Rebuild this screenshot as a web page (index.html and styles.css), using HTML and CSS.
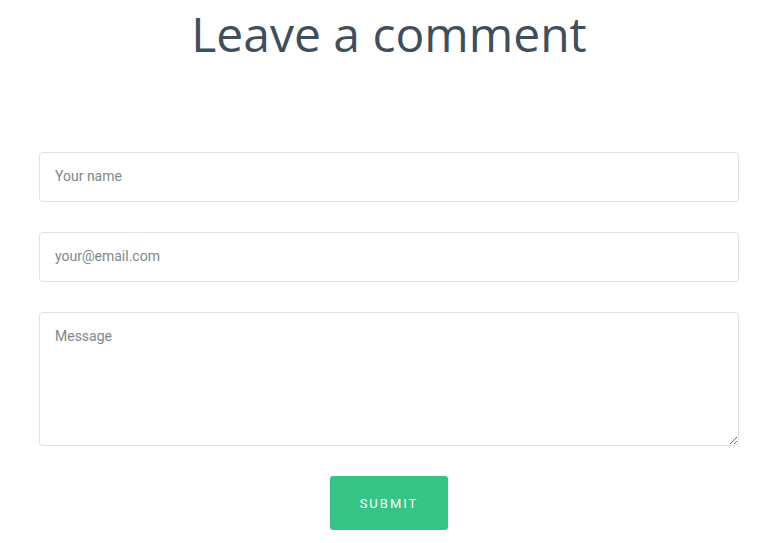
FILE: index.html
```html
<!DOCTYPE html>
<html lang="en">
<head>
<meta charset="utf-8">
<title>Leave a comment</title>
<link rel="stylesheet" href="styles.css">
</head>
<body>
<section class="comment">
  <h1 class="comment-title">Leave a comment</h1>
  <form class="comment-form">
    <input class="field" type="text" placeholder="Your name">
    <input class="field" type="email" placeholder="your@email.com">
    <textarea class="field field-message" placeholder="Message"></textarea>
    <div class="actions">
      <button class="submit" type="button">Submit</button>
    </div>
  </form>
</section>
</body>
</html>
```

FILE: styles.css
```css
html, body {
  margin: 0;
  padding: 0;
  background: #ffffff;
}

.comment {
  width: 700px;
  margin-left: 39px;
  display: flex;
  flex-direction: column;
}

.comment-title {
  margin: 0;
  padding-top: 6px;
  font-family: "Open Sans", sans-serif;
  font-weight: 400;
  font-size: 48px;
  line-height: 56px;
  color: #3d4f5d;
  text-align: center;
}

.comment-form {
  margin-top: 90px;
  display: flex;
  flex-direction: column;
  gap: 30px;
}

.field {
  box-sizing: border-box;
  display: block;
  width: 700px;
  height: 50px;
  margin: 0;
  padding: 0 15px 2px;
  border: 1px solid #e1e1e1;
  border-radius: 4px;
  background: #ffffff;
  font-family: Roboto, sans-serif;
  font-size: 14px;
  color: #333;
  outline: none;
}

.field::placeholder {
  color: #7d8791;
  opacity: 1;
}

.field-message {
  height: 134px;
  padding: 14px 15px;
  line-height: 18px;
  resize: vertical;
}

.actions {
  display: flex;
  justify-content: center;
}

.submit {
  width: 118px;
  height: 54px;
  border: none;
  border-radius: 3px;
  background: #36c486;
  color: #ffffff;
  font-family: Roboto, sans-serif;
  font-size: 13px;
  font-weight: 400;
  letter-spacing: 2px;
  text-transform: uppercase;
  cursor: pointer;
}
```
